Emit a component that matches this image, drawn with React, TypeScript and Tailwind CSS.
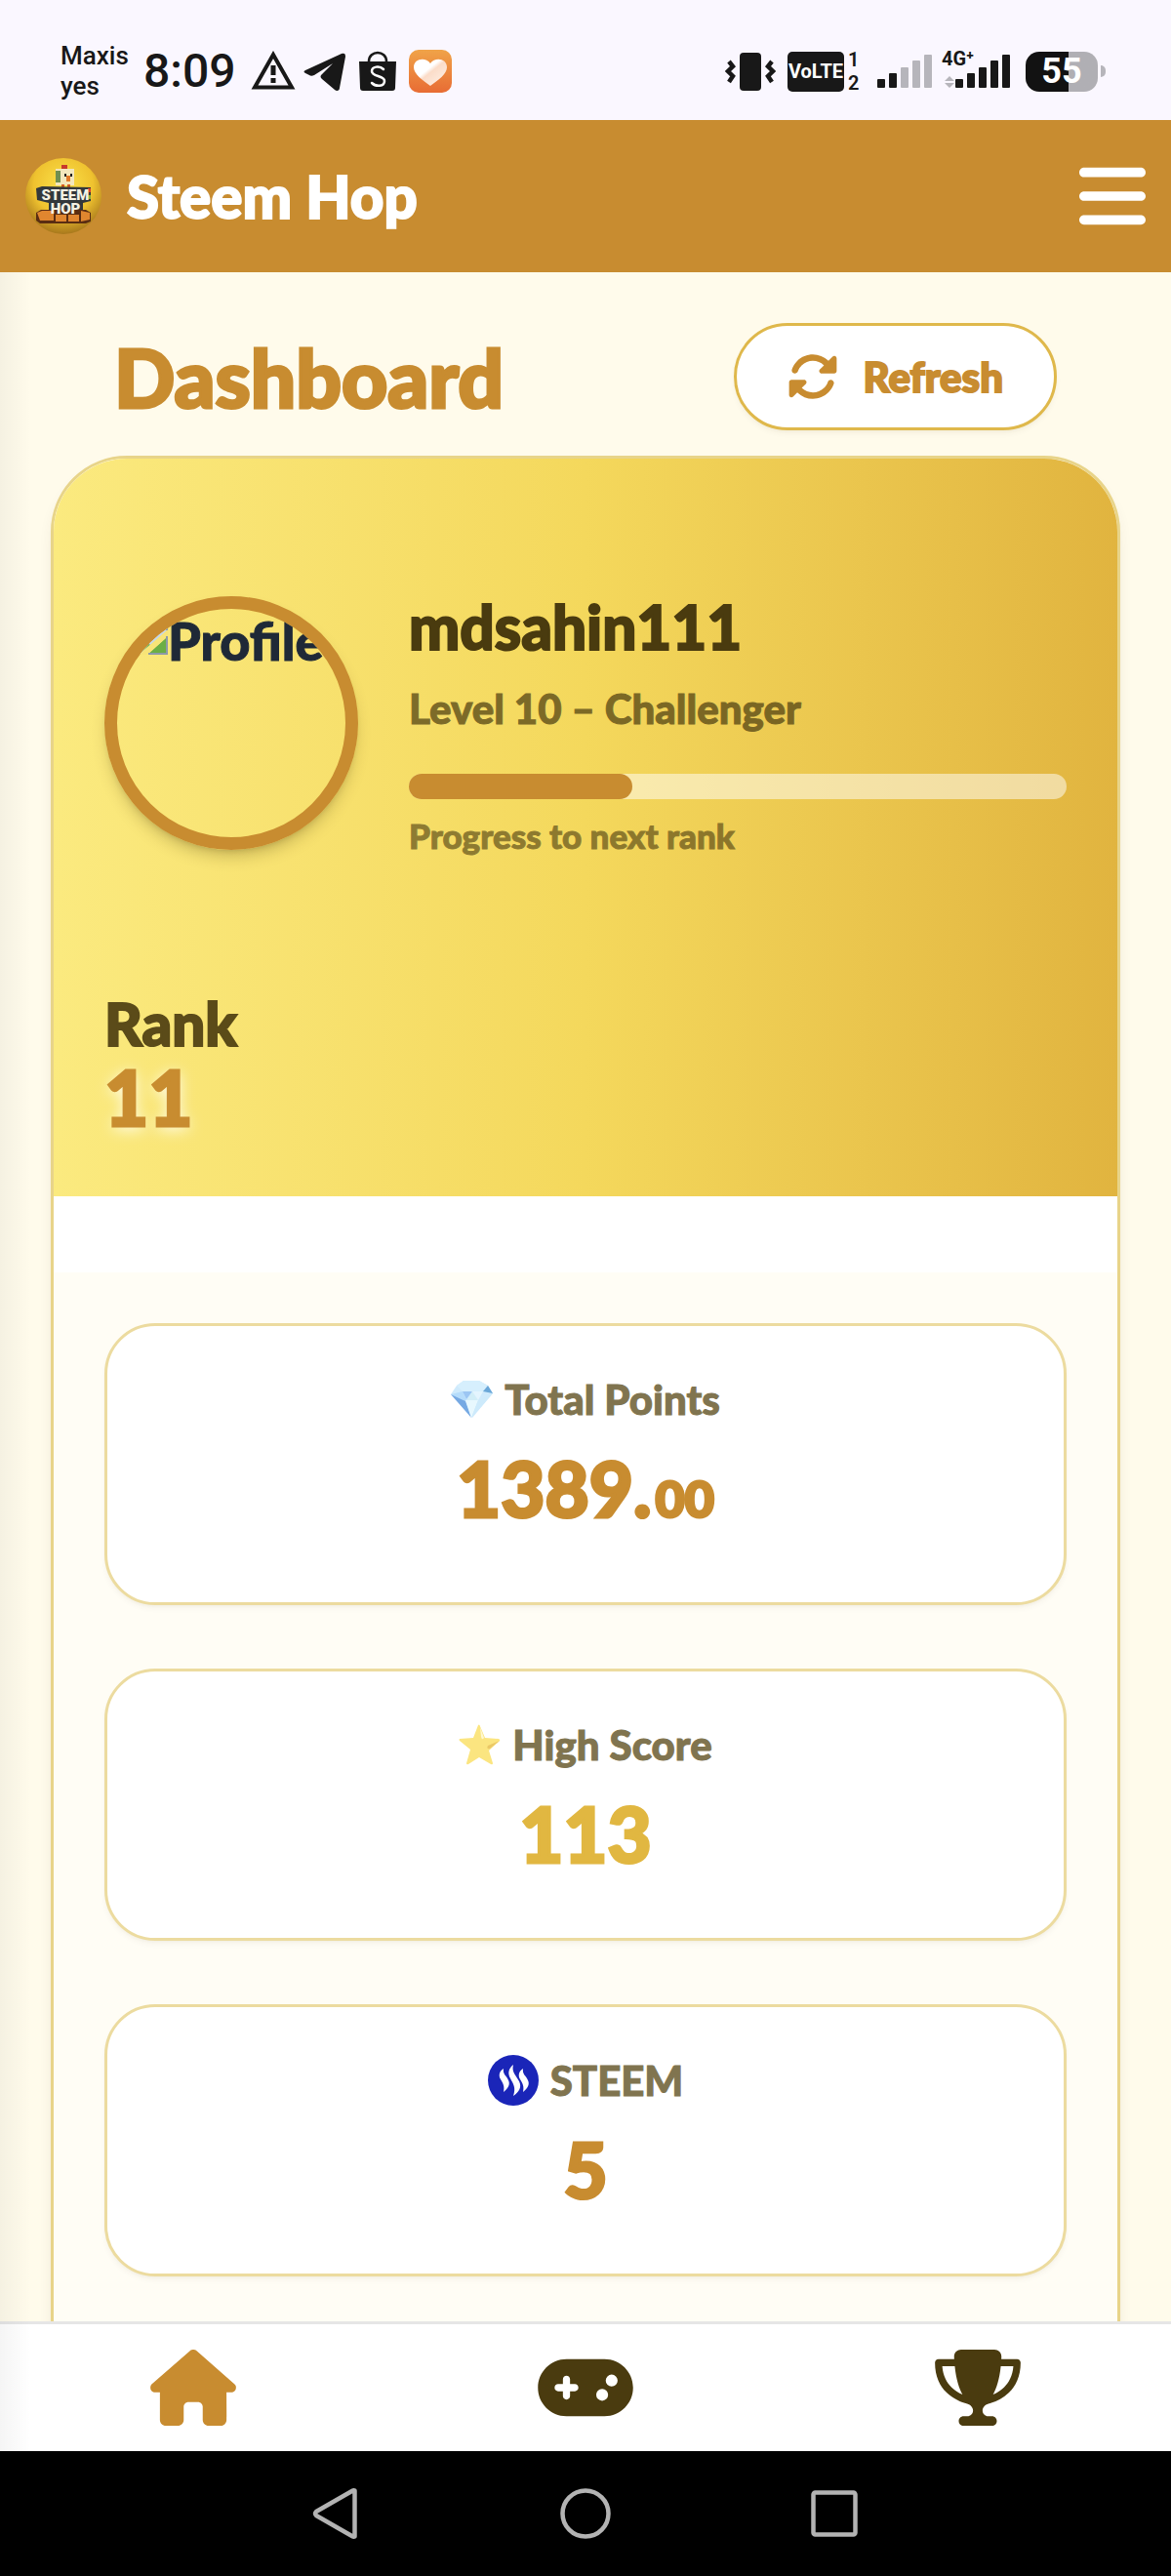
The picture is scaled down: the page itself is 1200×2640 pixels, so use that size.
import type { ReactNode } from "react";
import { FaBars, FaGamepad, FaHouse, FaRotate, FaTrophy } from "react-icons/fa6";

const SignalBars = ({ level }: { level: number }) => {
  const heights = [9, 15, 21, 28, 34];
  return (
    <svg className="w-14 h-[34px]" viewBox="0 0 56 34">
      {heights.map((h, i) => (
        <rect
          key={h}
          x={i * 12}
          y={34 - h}
          width="8"
          height={h}
          rx="1"
          fill={i < level ? "#181818" : "#b6b5bb"}
        />
      ))}
    </svg>
  );
};

const StatusBar = () => {
  return (
    <div className="shrink-0 h-[123px] bg-[#faf7ff] text-[#181818] font-['Roboto',sans-serif] pt-[41px] pl-[62px] pr-[67px] flex items-start justify-between">
      <div className="flex items-center">
        <div className="w-[85px] text-[26px] leading-[31px] font-medium">
          <p>Maxis</p>
          <p>yes</p>
        </div>
        <p className="w-[110px] text-[48px] leading-[64px] font-medium">8:09</p>
        <svg className="w-[46px] h-[42px]" viewBox="0 0 46 42" fill="none">
          <path d="M23 4 4 37.500h38z" stroke="#181818" strokeWidth="4" />
          <path d="M23 15v10M23 28v5" stroke="#181818" strokeWidth="5" />
        </svg>
        <svg className="ml-2 w-[44px] h-[42px]" viewBox="0 0 44 42" fill="#181818">
          <path d="M2 20 39 3c3-1 4 0 4 3l-6 32c0 3-3 4-5 2L19 29c-2-2-2-3 0-5l11-11-19 12c-2 1-4 1-5 0l-4-2c-2-1-2-2 0-3z" />
        </svg>
        <svg className="ml-3 w-10 h-[42px]" viewBox="0 0 40 42">
          <path d="M11 11c0-12 18-12 18 0" fill="none" stroke="#181818" strokeWidth="2.500" />
          <path d="M1 11h38l-1 27q0 3-3 3H5q-3 0-3-3z" fill="#181818" />
          <path
            d="M26 19c-4-4-12-3-12 2 0 6 13 4 13 10 0 6-9 6-13 2"
            fill="none"
            stroke="#fff"
            strokeWidth="2.500"
            strokeLinecap="round"
          />
        </svg>
        <svg className="ml-3 w-11 h-11" viewBox="0 0 44 44">
          <defs>
            <linearGradient id="heartBg" x1="0" y1="0" x2="0" y2="1">
              <stop offset="0" stopColor="#f0a348" />
              <stop offset="1" stopColor="#e86c34" />
            </linearGradient>
            <linearGradient id="heartFill" x1="0" y1="0" x2="1" y2="1">
              <stop offset="0.4" stopColor="#fff" />
              <stop offset="0.5" stopColor="#fbdcc8" />
              <stop offset="1" stopColor="#fff3ea" />
            </linearGradient>
          </defs>
          <rect width="44" height="44" rx="10" fill="url(#heartBg)" />
          <path
            d="M22 37C14 31 5 25 5 18c0-9 12-11 17-4 5-7 17-5 17 4 0 7-9 13-17 19z"
            fill="url(#heartFill)"
          />
        </svg>
      </div>
      <div className="flex items-center h-[64px]">
        <svg className="w-[52px] h-10" viewBox="0 0 52 40" fill="none" stroke="#181818">
          <rect x="15" y="1" width="22" height="39" rx="4" fill="#181818" stroke="none" />
          <path
            d="M4 10l4 5-5 5 5 5-4 6M48 10l-4 5 5 5-5 5 4 6"
            strokeWidth="4.500"
          />
        </svg>
        <span className="ml-3 w-[58px] h-[41px] rounded-[5px] bg-[#181818] text-white text-[20px] font-bold flex items-center justify-center">
          VoLTE
        </span>
        <span className="ml-1 w-3 text-[20px] leading-6 font-semibold">
          1<br />2
        </span>
        <div className="ml-[18px]">
          <SignalBars level={2} />
        </div>
        <div className="ml-6 relative">
          <SignalBars level={5} />
          <span className="absolute -left-[14px] -top-2 text-[20px] leading-6 font-bold">4G⁺</span>
          <svg className="absolute -left-[11px] bottom-0 w-[10px] h-3" viewBox="0 0 10 12" fill="#b6b5bb">
            <path d="M5 0l5 5H0zM5 12l5-5H0z" />
          </svg>
        </div>
        <span className="ml-4 w-[74px] h-[41px] rounded-[14px] bg-linear-to-r from-[#121212] from-60% to-[#b0afb4] to-60% text-white text-[36px] leading-[41px] text-center font-bold">
          55
        </span>
        <span className="ml-[3px] w-[5px] h-3 rounded-r-full bg-[#b6b5bb]" />
      </div>
    </div>
  );
};

const GameLogo = () => {
  return (
    <svg className="w-[78px] h-[78px]" viewBox="0 0 78 78">
      <defs>
        <radialGradient id="logoSun" cx="0.5" cy="0.35" r="0.65">
          <stop offset="0" stopColor="#fbe24a" />
          <stop offset="0.6" stopColor="#efc22f" />
          <stop offset="1" stopColor="#a8781c" />
        </radialGradient>
      </defs>
      <circle cx="39" cy="39" r="39" fill="url(#logoSun)" />
      <path d="M37 7h6v5h-6z" fill="#c8392b" />
      <path d="M31 11h19v17H31z" fill="#f3e7bd" />
      <path d="M31 13h5v12h-5z" fill="#6f8f52" />
      <path d="M40 16h2v3h-2zM46 16h2v3h-2z" fill="#222" />
      <path d="M42 18h4v6h-4z" fill="#e27a2a" />
      <path d="M37 27h3v5h-3zM43 27h3v5h-3z" fill="#d25b1f" />
      <path d="M11 31l6-2 50 1v14l-8 2v12H24V46l-12-3z" fill="#33383b" />
      <path d="M64 31h3v4h-3z" fill="#d8402f" />
      <path d="M64 38h3v4h-3z" fill="#7fae3f" />
      <path d="M11 56l5-3h46l5 3v9l-5 2H15l-4-3z" fill="#5a2d12" />
      <path d="M12 56l5-2h12v10H15zM31 58h11v7H31zM44 58h11v7H44zM57 54l9 2v7l-9 2z" fill="#e0862f" />
      <text
        x="41"
        y="43"
        textAnchor="middle"
        className="text-[15px] font-black font-['Roboto',sans-serif]"
        fill="#f4f1e4"
      >
        STEEM
      </text>
      <text
        x="41"
        y="57"
        textAnchor="middle"
        className="text-[15px] font-black font-['Roboto',sans-serif]"
        fill="#f4f1e4"
      >
        HOP
      </text>
    </svg>
  );
};

const DiamondIcon = () => {
  return (
    <svg className="w-[43px] h-[38px]" viewBox="0 0 43 38">
      <path d="M13 0h16l9 5 5 8-21 25L0 14l6-9z" fill="#cfeafc" />
      <path d="M13 0h16l9 5-5 6-11 0-10 0-6-6z" fill="#d6effd" />
      <path d="M0 14l12-3 4 9-1 1z" fill="#b5dcfb" />
      <path d="M12 11h10l-6 8z" fill="#9cc6f3" />
      <path d="M22 11l6 9H17z" fill="#d2eef7" />
      <path d="M22 11l11 0-5 9z" fill="#e4f5fe" />
      <path d="M0 14l15 7 6 17z" fill="#76a9e3" />
      <path d="M15 20h13l-7 18z" fill="#e8f8fe" />
      <path d="M28 20l15-7-22 25z" fill="#cdeafb" />
      <path d="M33 11l5-6 5 8z" fill="#6aa7d8" />
    </svg>
  );
};

const StarIcon = () => {
  return (
    <svg className="w-[43px] h-[42px]" viewBox="0 0 43 42">
      <path
        d="M21.500 1 27 14l14 1q2 1 1 2L31 27l4 13q0 2-2 1l-12-7-11 7q-2 1-2-1l4-14L1 17q-1-1 0-2l14-1 5-13q1-1 1.500 0z"
        fill="#fbe580"
      />
      <path d="M22 3l4 11q-2 3-3-1z" fill="#fff8cf" />
      <path d="M42 17l-10 8q-4 1-2-3z" fill="#ebc866" />
    </svg>
  );
};

const SteemIcon = () => {
  return (
    <svg className="w-[52px] h-[52px]" viewBox="0 0 52 52">
      <circle cx="26" cy="26" r="26" fill="#1a25b8" />
      <g fill="#fff">
        <path d="M16 14c-5 3-5 8-3 11 3 5 4 7 3 13 5-4 7-8 5-12-2-5-6-6-5-12z" />
        <path d="M26 10c-5 4-6 9-3 14 3 6 6 9 3 18 6-4 9-9 6-15-3-6-8-9-6-17z" />
        <path d="M36 14c-5 3-5 8-3 11 3 5 4 7 3 13 5-4 7-8 5-12-2-5-6-6-5-12z" />
      </g>
    </svg>
  );
};

type StatCardProps = {
  icon: ReactNode;
  label: string;
  children: ReactNode;
  className: string;
};

const StatCard = ({ icon, label, children, className }: StatCardProps) => {
  return (
    <div className="rounded-[52px] border-[3px] border-[#ecdb9f] bg-white shadow-md shadow-[#4a3b0f]/5 pt-[49px] pb-[68px] text-center">
      <div className="flex items-center justify-center gap-3 text-[42px] leading-[52px] text-[#80744f]">
        {icon}
        <h3>{label}</h3>
      </div>
      <p className={`mt-[26px] text-[78px] leading-[78px] [-webkit-text-stroke:3px] ${className}`}>
        {children}
      </p>
    </div>
  );
};

export default function App() {
  const progress = 34;

  return (
    <div className="h-screen flex flex-col bg-[#fffbeb] font-['Lato',sans-serif] font-black">
      <StatusBar />
      <header className="shrink-0 h-[156px] bg-[#c88c30] px-[26px] flex items-center justify-between">
        <div className="flex items-center gap-[26px]">
          <GameLogo />
          <span className="text-white text-[60px] leading-[78px] [-webkit-text-stroke:2px]">Steem Hop</span>
        </div>
        <button aria-label="Menu">
          <FaBars className="w-[68px] h-[78px] text-white" />
        </button>
      </header>

      <div className="relative flex-1 min-h-0 flex flex-col">
        <main className="flex-1 min-h-0 overflow-y-auto [scrollbar-width:none] px-[52px] pt-[52px] [-webkit-text-stroke:1px]">
          <div className="flex items-center justify-between px-[65px]">
            <h1 className="text-[82px] leading-[94px] text-[#c88c30] [-webkit-text-stroke:3px]">Dashboard</h1>
            <button className="h-[110px] px-[52px] rounded-full border-[3px] border-[#dfb84b] bg-white shadow-md shadow-[#4a3b0f]/5 flex items-center gap-[26px] text-[42px] text-[#c88c30] [-webkit-text-stroke:2px]">
              <FaRotate className="size-[52px]" />
              Refresh
            </button>
          </div>

          <section className="mt-[26px] rounded-t-[78px] border-[3px] border-[#e8d489] bg-white shadow-lg shadow-[#4a3b0f]/10 overflow-hidden">
            <div className="px-[52px] pt-[134px] pb-[63px] bg-linear-to-r from-[#fbea7f] via-[#f4d85c] to-[#e1b43f] text-[#4a3b0f]">
              <div className="flex items-center gap-[52px]">
                <div className="shrink-0 size-[260px] rounded-full border-[13px] border-[#c88c30] shadow-lg shadow-[#4a3b0f]/25 overflow-hidden flex items-start pl-[10px] text-[54px] leading-[66px] text-[#1f2937]">
                  <svg className="shrink-0 w-[42px] h-[42px] mt-3" viewBox="0 0 42 42">
                    <path d="M1 1h40v11L22 34H1z" fill="#c3d6ef" />
                    <path d="M1 33 15 17l9 8-10 8z" fill="#6cae45" />
                    <path d="M22 34 41 17v17z" fill="#6cae45" />
                    <path d="M12 35 42 9v7L21 35z" fill="#f8e477" />
                    <path d="M41 1v9M41 16v18H22" fill="none" stroke="#8d9aa8" strokeWidth="2" />
                  </svg>
                  Profile
                </div>
                <div className="flex-1 min-w-0">
                  <h2 className="text-[62px] leading-[76px] [-webkit-text-stroke:2px]">mdsahin111</h2>
                  <p className="mt-5 text-[42px] leading-[52px] opacity-70">Level 10 – Challenger</p>
                  <div className="mt-[41px] h-[26px] rounded-full bg-white/50">
                    <div className="h-full rounded-full bg-[#c88c30]" style={{ width: `${progress}%` }} />
                  </div>
                  <p className="mt-4 text-[35px] leading-[42px] opacity-60">Progress to next rank</p>
                </div>
              </div>
              <p className="mt-[136px] text-[60px] leading-[72px] opacity-90 [-webkit-text-stroke:2px]">Rank</p>
              <p className="text-[78px] leading-[78px] text-[#c88c30] [-webkit-text-stroke:3px] [text-shadow:0_3px_16px_#fff]">
                11
              </p>
            </div>

            <div className="mt-[78px] p-[52px] pb-[104px] bg-[#fffdf5] flex flex-col gap-[65px]">
              <StatCard icon={<DiamondIcon />} label="Total Points" className="text-[#c88c30]">
                1389.<span className="ml-1 text-[52px]">00</span>
              </StatCard>
              <StatCard icon={<StarIcon />} label="High Score" className="text-[#e1b741]">
                113
              </StatCard>
              <StatCard icon={<SteemIcon />} label="STEEM" className="text-[#c88c30]">
                5
              </StatCard>
            </div>
          </section>
        </main>

        <nav className="shrink-0 h-[133px] border-t-[3px] border-[#e6e6e6] bg-white flex items-center justify-around text-[#4a3b0f]">
          <a href="#home" aria-label="Home" className="text-[#c88c30]">
            <FaHouse className="w-[88px] h-[78px]" />
          </a>
          <a href="#play" aria-label="Play">
            <FaGamepad className="w-[98px] h-[78px]" />
          </a>
          <a href="#leaderboard" aria-label="Leaderboard">
            <FaTrophy className="w-[88px] h-[78px]" />
          </a>
        </nav>

        {/* edge shadow of the closed drawer */}
        <div className="absolute inset-y-0 left-0 w-8 bg-linear-to-r from-black/4 to-transparent pointer-events-none" />
      </div>

      <div className="shrink-0 h-32 bg-black flex items-center justify-center gap-[203px]">
        <button aria-label="Back">
          <svg className="size-[52px]" viewBox="0 0 52 52" fill="none">
            <path
              d="M44.500 2.500v47q-1 .5-2 0L5 28q-2-2 0-4L42.500 2.500q1-.5 2 0z"
              stroke="#b3b3b3"
              strokeWidth="4.500"
              strokeLinejoin="round"
            />
          </svg>
        </button>
        <button aria-label="Home screen">
          <svg className="size-[52px]" viewBox="0 0 52 52" fill="none">
            <circle cx="26" cy="26" r="23.500" stroke="#b3b3b3" strokeWidth="4.500" />
          </svg>
        </button>
        <button aria-label="Recent apps">
          <svg className="size-[52px]" viewBox="0 0 52 52" fill="none">
            <rect x="4.500" y="4.500" width="43" height="43" rx="2" stroke="#b3b3b3" strokeWidth="4.500" />
          </svg>
        </button>
      </div>
    </div>
  );
}
